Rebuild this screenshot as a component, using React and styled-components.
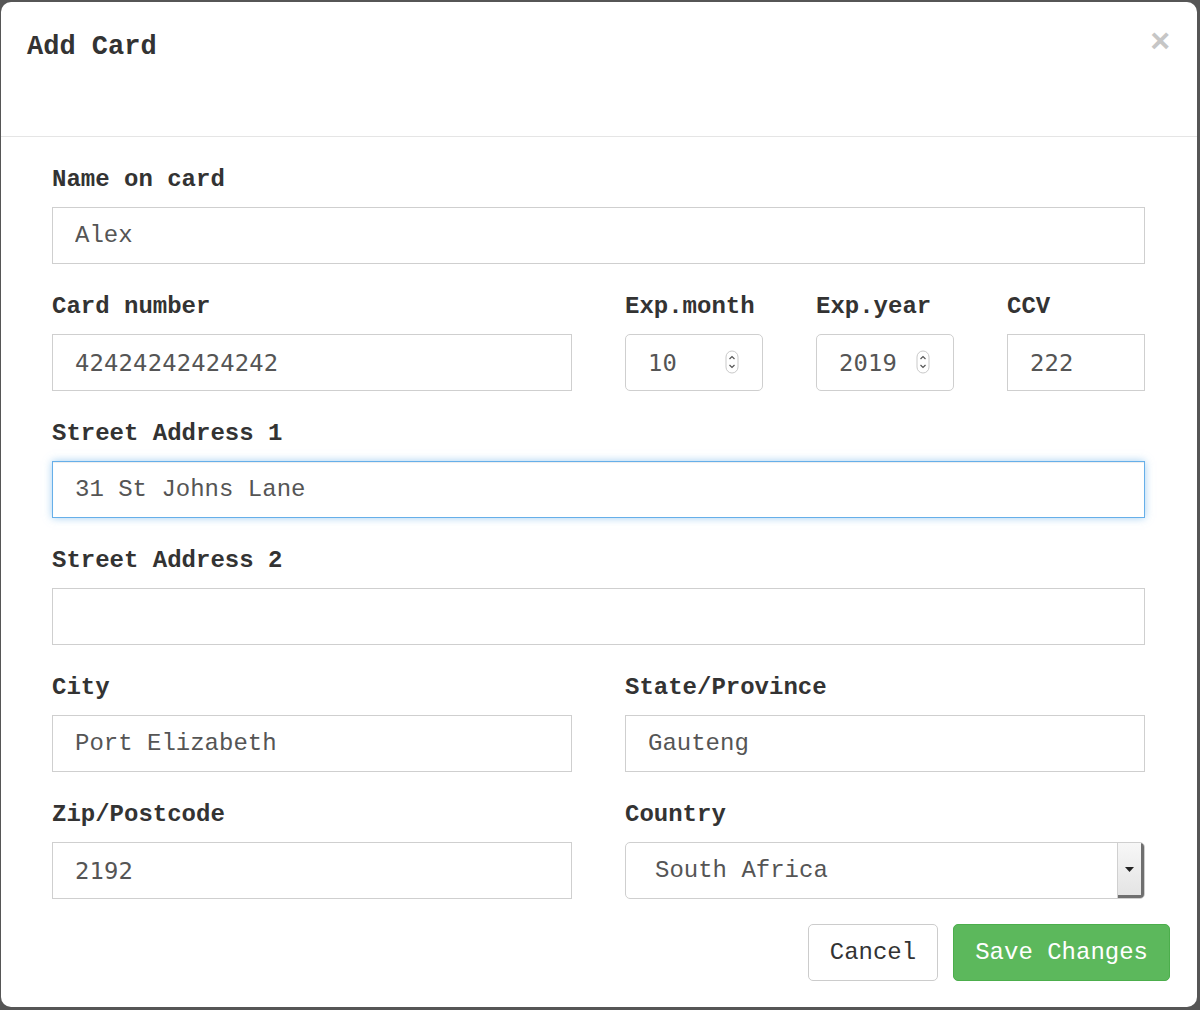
import styled, { createGlobalStyle, css } from 'styled-components';

const GlobalStyle = createGlobalStyle`
  html, body {
    margin: 0;
    padding: 0;
    background: #565656;
  }
  * {
    box-sizing: border-box;
  }
`;

const mono = `'Liberation Mono', 'Courier New', monospace`;
const digits = `'DejaVu Sans Mono', 'Liberation Mono', monospace`;

const Modal = styled.div`
  margin: 2px 3px 3px 1px;
  height: 1005px;
  background: #fff;
  border-radius: 10px;
  display: flex;
  flex-direction: column;
  font-family: ${mono};
  color: #333;
`;

const Header = styled.div`
  height: 135px;
  padding: 30px 27px 0 26px;
  border-bottom: 1px solid #e5e5e5;
  display: flex;
  justify-content: space-between;
  align-items: flex-start;
`;

const Title = styled.h4`
  margin: 0;
  font-size: 27px;
  line-height: 30px;
  font-weight: 700;
  color: #333;
`;

const Close = styled.button`
  border: 0;
  background: none;
  padding: 0;
  margin-top: -9px;
  font-family: 'Liberation Sans', Arial, sans-serif;
  font-size: 34px;
  line-height: 34px;
  font-weight: 700;
  color: #c6c6c6;
  cursor: pointer;
`;

const Body = styled.form`
  padding: 28px 52px 0 51px;
  display: flex;
  flex-direction: column;
  gap: 28px;
`;

const Row = styled.div`
  display: grid;
  grid-template-columns: ${(p) => p.$cols || '1fr'};
  column-gap: 53px;
`;

const Group = styled.div`
  display: flex;
  flex-direction: column;
  min-width: 0;
`;

const Label = styled.label`
  font-size: 24px;
  line-height: 30px;
  font-weight: 700;
  color: #333;
  margin-bottom: 12px;
  white-space: nowrap;
`;

const fieldBase = css`
  width: 100%;
  height: 57px;
  border: 1px solid #cfcfcf;
  background: #fff;
  color: #555;
  font-size: 24px;
  padding: 0 22px;
  outline: none;
`;

const Input = styled.input`
  ${fieldBase}
  font-family: ${(p) => (p.$digits ? digits : mono)};
  font-size: ${(p) => (p.$digits ? '23.8px' : '24px')};
  letter-spacing: ${(p) => (p.$digits ? '0.2px' : '0')};
  border-radius: ${(p) => (p.$rounded ? '5px' : '0')};
  border-color: ${(p) => (p.$focused ? '#66afe9' : '#cfcfcf')};
  box-shadow: ${(p) =>
    p.$focused
      ? 'inset 0 1px 1px rgba(0,0,0,.075), 0 0 8px rgba(102,175,233,.6)'
      : 'none'};
`;

const SpinWrap = styled.div`
  position: relative;
`;

const Spinner = styled.svg`
  position: absolute;
  right: 24px;
  top: 16px;
  width: 14px;
  height: 24px;
  pointer-events: none;
`;

const Select = styled.div`
  ${fieldBase}
  display: flex;
  align-items: center;
  padding: 0 0 0 29px;
  border-radius: 5px;
  font-family: ${mono};
  overflow: hidden;
`;

const SelectText = styled.span`
  flex: 1;
`;

const SelectArrow = styled.span`
  width: 27px;
  height: 100%;
  display: flex;
  align-items: center;
  justify-content: center;
  background: linear-gradient(#f7f7f7, #e3e3e3);
  border-left: 1px solid #d0d0d0;
  box-shadow: inset -3px -3px 0 #6f6f6f;
  padding: 0 3px 3px 0;
`;

const Footer = styled.div`
  margin-top: auto;
  padding: 0 27px 26px 0;
  display: flex;
  justify-content: flex-end;
  gap: 15px;
`;

const Button = styled.button`
  height: 57px;
  padding: 0 21px;
  border-radius: 5px;
  font-family: ${mono};
  font-size: 24px;
  cursor: pointer;
  border: 1px solid ${(p) => (p.$primary ? '#4cae4c' : '#ccc')};
  background: ${(p) => (p.$primary ? '#5cb85c' : '#fff')};
  color: ${(p) => (p.$primary ? '#fff' : '#333')};
`;

const SpinIcon = () => (
  <Spinner viewBox="0 0 14 24">
    <rect x="1" y="1" width="12" height="22" rx="6" fill="#fff" stroke="#c9c9c9" />
    <path d="M4.5 9 L7 6.5 L9.5 9" fill="none" stroke="#555" strokeWidth="1.2" />
    <path d="M4.5 15 L7 17.5 L9.5 15" fill="none" stroke="#555" strokeWidth="1.2" />
  </Spinner>
);

const Field = ({ label, value, digits: d, focused, rounded, spin }) => (
  <Group>
    <Label>{label}</Label>
    {spin ? (
      <SpinWrap>
        <Input defaultValue={value} $digits={d} $rounded={rounded} readOnly />
        <SpinIcon />
      </SpinWrap>
    ) : (
      <Input defaultValue={value} $digits={d} $focused={focused} $rounded={rounded} readOnly />
    )}
  </Group>
);

const App = () => {
  return (
    <>
      <GlobalStyle />
      <Modal>
        <Header>
          <Title>Add Card</Title>
          <Close type="button">×</Close>
        </Header>
        <Body onSubmit={(e) => e.preventDefault()}>
          <Row>
            <Field label="Name on card" value="Alex" />
          </Row>
          <Row $cols="1fr 1fr">
            <Field label="Card number" value="42424242424242" digits />
            <Row $cols="1fr 1fr 1fr">
              <Field label="Exp.month" value="10" digits rounded spin />
              <Field label="Exp.year" value="2019" digits rounded spin />
              <Field label="CCV" value="222" digits />
            </Row>
          </Row>
          <Row>
            <Field label="Street Address 1" value="31 St Johns Lane" focused />
          </Row>
          <Row>
            <Field label="Street Address 2" value="" />
          </Row>
          <Row $cols="1fr 1fr">
            <Field label="City" value="Port Elizabeth" />
            <Field label="State/Province" value="Gauteng" />
          </Row>
          <Row $cols="1fr 1fr">
            <Field label="Zip/Postcode" value="2192" digits />
            <Group>
              <Label>Country</Label>
              <Select>
                <SelectText>South Africa</SelectText>
                <SelectArrow>
                  <svg width="9" height="5" viewBox="0 0 9 5">
                    <path d="M0 0 H9 L4.5 5 Z" fill="#222" />
                  </svg>
                </SelectArrow>
              </Select>
            </Group>
          </Row>
        </Body>
        <Footer>
          <Button type="button">Cancel</Button>
          <Button type="button" $primary>
            Save Changes
          </Button>
        </Footer>
      </Modal>
    </>
  );
};

export default App;
